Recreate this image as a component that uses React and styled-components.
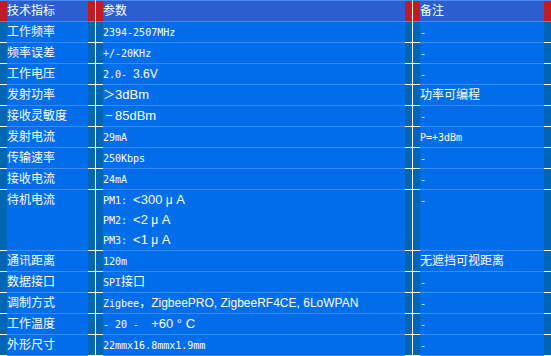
import React from "react";
import styled, { createGlobalStyle } from "styled-components";

const Global = createGlobalStyle`
  html, body { margin: 0; padding: 0; background: #ffffff; }
  body { font-family: "Liberation Sans", Arial, sans-serif; }
`;

const Table = styled.div`
  display: grid;
  grid-template-columns: 95px 316px 138px;
  column-gap: 1px;
  width: 551px;
  background: #ffffff;
`;

const Cell = styled.div`
  display: flex;
  align-items: stretch;
  border-top: ${(p) => (p.$head ? "1px solid #4a8cf0" : "0")};
`;

const Strip = styled.div`
  flex: 0 0 7px;
  background: ${(p) => (p.$head ? "#c41a22" : "#0066b4")};
  border-bottom: 1px solid ${(p) => (p.$head ? "#3a8cf4" : "#ffffff")};
`;

const Content = styled.div`
  flex: 1;
  min-width: 0;
  background: ${(p) => (p.$head ? "#2b5fd0" : "#006eea")};
  border-bottom: 1px solid #3a8cf4;
  color: #ffffff;
  overflow: hidden;
`;

const Line = styled.div`
  height: 20px;
  font-family: "Liberation Sans", Arial, sans-serif;
  font-size: 12px;
  line-height: 20px;
  white-space: pre;
  overflow: hidden;
`;

const Mono = styled.span`
  font-family: "DejaVu Sans Mono", monospace;
  font-size: 10px;
  line-height: 0;
`;

const Cjk = styled.span`
  font-family: "Noto Sans CJK SC", sans-serif;
  font-size: 12px;
  line-height: 0;
`;

const Sans = styled.span`
  font-family: "Liberation Sans", Arial, sans-serif;
  font-size: ${(p) => p.$size || 12}px;
  line-height: 0;
`;

const WideSign = styled.span`
  display: inline-block;
  width: 12px;
  text-align: center;
  font-family: "Liberation Sans", Arial, sans-serif;
  font-size: 13px;
  line-height: 0;
`;

const dash = <Mono>-</Mono>;

const micro = (lead, value) => (
  <>
    <Mono>{lead}</Mono>
    <Sans $size={13}>{value}</Sans>
    <Sans $size={12}>{" μ"}</Sans>
    <Sans $size={13}>{" A"}</Sans>
  </>
);

const rows = [
  { name: "工作频率", param: [<Mono>2394-2507MHz</Mono>], note: dash },
  { name: "频率误差", param: [<Mono>+/-20KHz</Mono>], note: dash },
  {
    name: "工作电压",
    param: [
      <>
        <Mono>{"2.0- "}</Mono>
        <Sans>3.6V</Sans>
      </>,
    ],
    note: dash,
  },
  {
    name: "发射功率",
    param: [
      <>
        <Cjk>＞</Cjk>
        <Sans $size={13}>3dBm</Sans>
      </>,
    ],
    note: <Cjk>功率可编程</Cjk>,
  },
  {
    name: "接收灵敏度",
    param: [
      <>
        <WideSign>−</WideSign>
        <Sans $size={13}>85dBm</Sans>
      </>,
    ],
    note: dash,
  },
  { name: "发射电流", param: [<Mono>29mA</Mono>], note: <Mono>P=+3dBm</Mono> },
  { name: "传输速率", param: [<Mono>250Kbps</Mono>], note: dash },
  { name: "接收电流", param: [<Mono>24mA</Mono>], note: dash },
  {
    name: "待机电流",
    param: [micro("PM1: ", "<300"), micro("PM2: ", "<2"), micro("PM3: ", "<1")],
    note: dash,
  },
  { name: "通讯距离", param: [<Mono>120m</Mono>], note: <Cjk>无遮挡可视距离</Cjk> },
  {
    name: "数据接口",
    param: [
      <>
        <Mono>SPI</Mono>
        <Cjk>接口</Cjk>
      </>,
    ],
    note: dash,
  },
  {
    name: "调制方式",
    param: [
      <>
        <Mono>Zigbee</Mono>
        <Cjk>，</Cjk>
        <Sans>ZigbeePRO, ZigbeeRF4CE, 6LoWPAN</Sans>
      </>,
    ],
    note: dash,
  },
  {
    name: "工作温度",
    param: [
      <>
        <Mono>{"- 20 -  "}</Mono>
        <Sans $size={13}>{"+60 ° C"}</Sans>
      </>,
    ],
    note: dash,
  },
  { name: "外形尺寸", param: [<Mono>22mmx16.8mmx1.9mm</Mono>], note: dash },
];

function TableCell({ head, lines }) {
  return (
    <Cell $head={head}>
      <Strip $head={head} />
      <Content $head={head}>
        {lines.map((l, i) => (
          <Line key={i}>{l}</Line>
        ))}
      </Content>
      <Strip $head={head} />
    </Cell>
  );
}

export default function App() {
  return (
    <>
      <Global />
      <Table>
        <TableCell head lines={[<Cjk>技术指标</Cjk>]} />
        <TableCell head lines={[<Cjk>参数</Cjk>]} />
        <TableCell head lines={[<Cjk>备注</Cjk>]} />
        {rows.map((r) => (
          <React.Fragment key={r.name}>
            <TableCell lines={[<Cjk>{r.name}</Cjk>]} />
            <TableCell lines={r.param} />
            <TableCell lines={[r.note]} />
          </React.Fragment>
        ))}
      </Table>
    </>
  );
}
